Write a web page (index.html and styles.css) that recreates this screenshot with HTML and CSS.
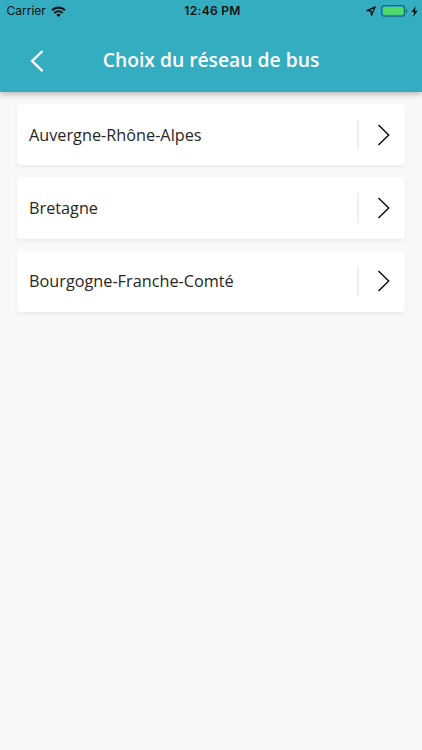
FILE: index.html
```html
<!DOCTYPE html>
<html lang="fr">
<head>
<meta charset="utf-8">
<title>Choix du réseau de bus</title>
<link rel="stylesheet" href="styles.css">
</head>
<body>
<header class="header">
  <div class="status">
    <div class="status-left"><span>Carrier</span>
      <svg class="wifi" width="15" height="11" viewBox="0 0 15 11" fill="none" stroke="#111" stroke-width="2.100"><path d="M1 4.300a9.200 9.200 0 0 1 13 0M3.400 6.900a5.800 5.800 0 0 1 8.200 0"/><path d="M7.500 11 5.300 8.800a3.100 3.100 0 0 1 4.400 0z" fill="#111" stroke="none"/></svg>
    </div>
    <div class="time">12:46 PM</div>
    <div class="status-right">
      <svg class="locate" width="10" height="10" viewBox="0 0 10 10" fill="none" stroke="#111" stroke-width="1.300"><path d="M9.200.800 1 4.600l4 .4.500 4.200z" stroke-linejoin="round"/></svg>
      <svg width="27" height="12" viewBox="0 0 27 12"><rect x=".6" y=".6" width="23" height="10.600" rx="2.600" fill="none" stroke="#146b7c" stroke-width="1.200"/><rect x="2" y="2" width="20.200" height="7.800" rx="1.200" fill="#4cd964"/><path d="M25 4c1.800.6 1.800 3.400 0 4z" fill="#146b7c"/></svg>
      <svg width="7" height="11" viewBox="0 0 7 11"><path d="M4.700.300.400 6h2.700L2.200 10.700 6.700 4.700H3.900z" fill="#111"/></svg>
    </div>
  </div>
  <div class="bar">
    <svg class="back" width="14" height="24" viewBox="0 0 14 24" fill="none" stroke="#fff" stroke-width="2.400"><path d="M12.500 2 2.200 12l10.300 10.200"/></svg>
    <h1>Choix du réseau de bus</h1>
  </div>
</header>
<main class="list">
  <div class="card"><span class="name">Auvergne-Rhône-Alpes</span><span class="go"><svg width="14" height="22" viewBox="0 0 14 22"><path d="M1.500 1 11.700 11 1.500 21"/></svg></span></div>
  <div class="card"><span class="name">Bretagne</span><span class="go"><svg width="14" height="22" viewBox="0 0 14 22"><path d="M1.500 1 11.700 11 1.500 21"/></svg></span></div>
  <div class="card"><span class="name">Bourgogne-Franche-Comté</span><span class="go"><svg width="14" height="22" viewBox="0 0 14 22"><path d="M1.500 1 11.700 11 1.500 21"/></svg></span></div>
</main>
</body>
</html>
```
FILE: styles.css
```css
* { box-sizing: border-box; }
body { margin: 0; min-height: 750px; background: #f8f8f8; font-family: "Open Sans", sans-serif; color: #262626; }
svg { display: block; flex: none; }
.header { height: 92px; background: #35adc1; box-shadow: 0 2px 6px rgba(0,0,0,.28); }
.status { display: grid; grid-template-columns: 1fr auto 1fr; align-items: center; height: 22px; padding: 0 4.500px 0 6.500px; font: 12px/22px Inter, sans-serif; color: #111; }
.status-left { display: flex; align-items: center; gap: 5px; }
.status-right { display: flex; align-items: center; justify-content: flex-end; gap: 2.500px; }
.locate { margin-right: 3px; }
.time { font-weight: 600; letter-spacing: .3px; margin-left: 1px; }
.bar { display: grid; grid-template-columns: 60px 1fr 60px; align-items: center; height: 70px; padding-top: 8px; }
.back { margin-left: 30px; }
h1 { margin: -3px 0 0; font-size: 19.300px; line-height: 26px; font-weight: 560; color: #fff; text-align: center; white-space: nowrap; }
.list { display: flex; flex-direction: column; gap: 12.200px; padding: 12px 17px 0 16.500px; }
.card { display: flex; align-items: center; height: 61.200px; padding-left: 12.500px; background: #fff; border-radius: 4px; box-shadow: 0 2px 4px rgba(0,0,0,.055); }
.name { flex: 1; font-size: 16.250px; line-height: 24px; }
.go { display: flex; align-items: center; height: 30px; width: 48px; padding-left: 18px; border-left: 2px solid #f0f0f0; }
.go path { fill: none; stroke: #111; stroke-width: 1.500; }
```
